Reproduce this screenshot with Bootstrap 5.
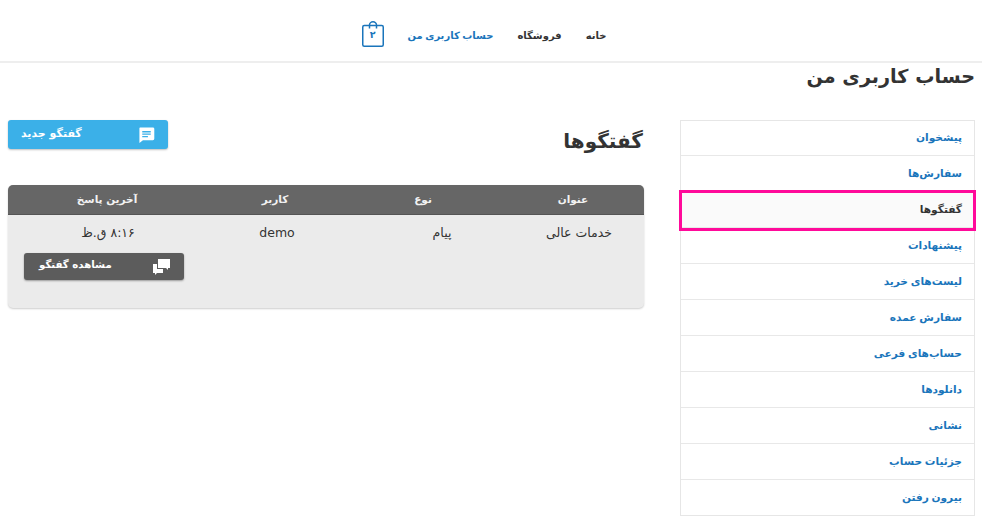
<!DOCTYPE html>
<html lang="fa" dir="rtl">
<head>
<meta charset="utf-8">
<title>حساب کاربری من</title>
<link href="https://cdn.jsdelivr.net/npm/bootstrap@5.3.0/dist/css/bootstrap.min.css" rel="stylesheet">
<style>
html,body{height:524px;overflow:hidden}
body{font-family:"DejaVu Sans",sans-serif;color:#333;background:#fff;font-size:12px}
.topbar{height:63px;border-bottom:2px solid #eee;gap:24px;padding-top:10px;padding-right:14px}
.topbar a{color:#333;text-decoration:none;font-weight:700;font-size:10px;letter-spacing:-.6px;word-spacing:-1px}
.topbar a.act{color:#1a75bb}
.bagbox{width:22px;height:26px;margin-top:-4px}
.bagbox svg{display:block}
.topbar .bagnum{font-size:9.5px;font-weight:700;color:#1a75bb;top:7px;left:0;right:0;text-align:center;line-height:14px;letter-spacing:0}
.pagewrap{padding:0 7px 0 8px}
.pagehead{font-size:19.2px;font-weight:700;line-height:28px;margin:0;color:#333}
.cols{gap:36px;margin-top:29px}
.sidecol{width:295px;flex:none}
.sidelist{border:1px solid #e6e6e6;border-radius:0}
.sidelist .list-group-item{height:36px;padding:0 12px;display:flex;align-items:center;font-size:10.6px;letter-spacing:-.5px;word-spacing:-1px;font-weight:700;color:#1a75bb;border:0;border-bottom:1.5px solid #e8e8e8;border-radius:0;background:#fff}
.sidelist .list-group-item:first-child{height:35px}
.sidelist .list-group-item:last-child{border-bottom:0;height:35px}
.sidelist .list-group-item.cur{color:#333;background:#fafafa;position:relative;z-index:1}
.sidelist .list-group-item.cur::after{content:"";position:absolute;inset:-2px -2px -4px;border:3px solid #ff0a9a}
.maincol{width:636px;flex:none}
.mainhead{height:65px}
.mainhead h2{font-size:20px;font-weight:700;margin:7px 1px 0 0;line-height:28px;color:#333}
.newbtn{width:160px;height:29px;background:#3bb0e8;color:#fff;border:0;border-radius:3px;box-shadow:0 1px 2px rgba(0,0,0,.25);font-size:11px;font-weight:700;padding:0 13px}
.newbtn:hover{background:#3bb0e8;color:#fff}
.talkbox{background:#ebebeb;border-radius:5px;box-shadow:0 1px 2px rgba(0,0,0,.2);height:123px;overflow:hidden}
.talkhead{height:30px;background:#666;color:#f2f2f2;font-weight:700;font-size:10.5px;letter-spacing:-.2px;border-bottom:1px solid #555;display:grid;grid-template-columns:142px 158px 138px 198px;align-items:center}
.talkhead>div,.talkrow>div{text-align:center}
.talkrow{display:grid;grid-template-columns:130px 144px 186px 176px;padding-top:9px;font-size:12.5px;color:#333;line-height:18px}
.lastcell{padding-left:16px}
.viewbtn{width:160px;height:27px;margin-top:11px;background:#5c5c5c;color:#fff;border:0;border-radius:3px;box-shadow:0 1px 2px rgba(0,0,0,.35);font-size:10.2px;letter-spacing:-.2px;font-weight:700;padding:0 14px 0 15px}
.viewbtn span{padding-bottom:3px}
.viewbtn:hover{background:#5c5c5c;color:#fff}
.timeval{padding-left:8px}
</style>
</head>
<body>
<nav class="topbar d-flex justify-content-center align-items-center">
  <a href="#">خانه</a>
  <a href="#">فروشگاه</a>
  <a href="#" class="act">حساب کاربری من</a>
  <a href="#" class="bagbox position-relative d-block">
    <svg width="22" height="26" viewBox="0 0 22 26" fill="none" stroke="#1a75bb" stroke-width="1.5" aria-hidden="true"><rect x=".75" y="4.500" width="20.500" height="20.750" rx="1.500"/><path d="M7.500 7.500V4a3.500 3.200 0 0 1 7 0v3.500"/></svg>
    <span class="bagnum position-absolute">۲</span>
  </a>
</nav>
<div class="pagewrap">
  <h1 class="pagehead">حساب کاربری من</h1>
  <div class="cols d-flex">
    <aside class="sidecol">
      <div class="list-group sidelist">
        <a href="#" class="list-group-item">پیشخوان</a>
        <a href="#" class="list-group-item">سفارش‌ها</a>
        <a href="#" class="list-group-item cur">گفتگوها</a>
        <a href="#" class="list-group-item">پیشنهادات</a>
        <a href="#" class="list-group-item">لیست‌های خرید</a>
        <a href="#" class="list-group-item">سفارش عمده</a>
        <a href="#" class="list-group-item">حساب‌های فرعی</a>
        <a href="#" class="list-group-item">دانلودها</a>
        <a href="#" class="list-group-item">نشانی</a>
        <a href="#" class="list-group-item">جزئیات حساب</a>
        <a href="#" class="list-group-item">بیرون رفتن</a>
      </div>
    </aside>
    <main class="maincol">
      <div class="mainhead d-flex justify-content-between align-items-start">
        <h2>گفتگوها</h2>
        <button class="btn newbtn d-flex justify-content-between align-items-center" type="button">
          <svg width="17" height="17" viewBox="0 0 24 24" fill="#fff" aria-hidden="true"><path d="M3 2h18a2 2 0 0 1 2 2v14a2 2 0 0 1-2 2H7l-5 4V3a1 1 0 0 1 1-1z"/><path d="M6 7h12v2H6zM6 10.500h12v2H6zM6 14h8v2H6z" fill="#3bb0e8"/></svg>
          <span>گفتگو جدید</span>
        </button>
      </div>
      <div class="talkbox">
        <div class="talkhead"><div>عنوان</div><div>نوع</div><div>کاربر</div><div>آخرین پاسخ</div></div>
        <div class="talkrow">
          <div>خدمات عالی</div>
          <div>پیام</div>
          <div>demo</div>
          <div class="lastcell">
            <div class="timeval">۸:۱۶ ق.ظ</div>
            <button class="btn viewbtn d-flex justify-content-between align-items-center" type="button">
              <svg width="17" height="16" viewBox="0 0 17 16" fill="#fff" aria-hidden="true"><path d="M5 0h12v9h-2v2l-2-2H5z"/><path d="M0 5h4v5h6v4H4l-2 2v-2H0z"/></svg>
              <span>مشاهده گفتگو</span>
            </button>
          </div>
        </div>
      </div>
    </main>
  </div>
</div>
<script src="https://cdn.jsdelivr.net/npm/bootstrap@5.3.0/dist/js/bootstrap.bundle.min.js"></script>
</body>
</html>
